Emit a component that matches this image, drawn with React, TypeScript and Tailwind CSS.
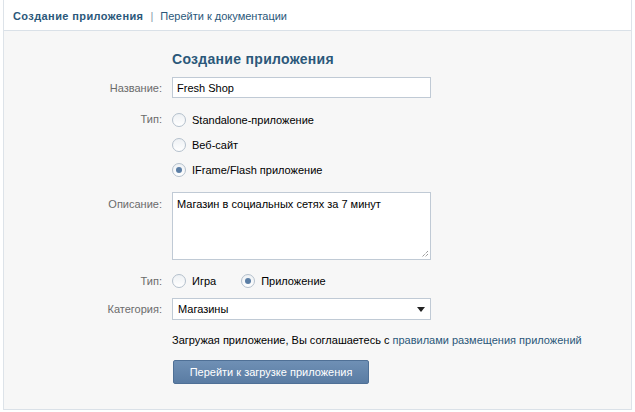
import React from "react";

const Radio = ({ checked = false }: { checked?: boolean }) => (
  <span className="relative inline-flex h-[14px] w-[14px] shrink-0 items-center justify-center rounded-full border border-[#b4c0cc] bg-gradient-to-b from-[#eef1f4] to-white">
    {checked && <span className="h-[6px] w-[6px] rounded-full bg-[#5b7ea5]" />}
  </span>
);

const Row = ({ label, children, top = false, className = "" }: { label: string; children: React.ReactNode; top?: boolean; className?: string }) => (
  <div className={`flex ${top ? "items-start" : "items-center"} ${className}`}>
    <div className={`w-[158px] shrink-0 text-right text-[#6b6b6b] ${top ? "pt-[5px]" : ""}`}>{label}</div>
    <div className="ml-[10px]">{children}</div>
  </div>
);

export default function App() {
  return (
    <div className="min-h-[412px] bg-white font-['Liberation_Sans',Arial,sans-serif] text-[11px] leading-[14px] text-black">
      <div className="ml-[3px] w-[629px] border-x border-[#dde3e9]">
        {/* header tabs */}
        <div className="flex h-[30px] items-center pl-[9px] pt-[1px]">
          <span className="font-bold tracking-[0.4px] text-[#2b587a]">Создание приложения</span>
          <span className="mx-[7px] text-[#8a9aab]">|</span>
          <span className="text-[#2b587a]">Перейти к документации</span>
        </div>

        <div className="border-y border-[#dae1e8] bg-[#f7f7f7] pb-[25px] pt-[20px]">
          <div className="ml-[168px] text-[14px] font-bold leading-[16px] tracking-[0.3px] text-[#2b587a]">Создание приложения</div>

          <Row label="Название:" className="mt-[10px]">
            <input
              readOnly
              defaultValue="Fresh Shop"
              className="h-[21px] w-[259px] border border-[#c0cad5] bg-white px-[4px] text-[11px] text-black outline-none"
            />
          </Row>

          <Row label="Тип:" top className="mt-[9px]">
            <div className="flex flex-col">
              {[
                ["Standalone-приложение", false],
                ["Веб-сайт", false],
                ["IFrame/Flash приложение", true],
              ].map(([t, c]) => (
                <div key={t as string} className="flex h-[25px] items-center gap-[6px]">
                  <Radio checked={c as boolean} />
                  <span>{t as string}</span>
                </div>
              ))}
            </div>
          </Row>

          <Row label="Описание:" top className="mt-[10px]">
            <div className="relative h-[68px] w-[259px] border border-[#c0cad5] bg-white px-[4px] pt-[4px]">
              Магазин в социальных сетях за 7 минут
              <svg className="absolute bottom-[1px] right-[1px]" width="9" height="9" viewBox="0 0 9 9">
                <path d="M8 2 L2 8 M8 5 L5 8" stroke="#6f6f6f" strokeWidth="1" strokeDasharray="1 1" />
              </svg>
            </div>
          </Row>

          <Row label="Тип:" className="mt-[8px] h-[25px]">
            <div className="flex items-center">
              <Radio />
              <span className="ml-[6px]">Игра</span>
              <span className="ml-[25px]"><Radio checked /></span>
              <span className="ml-[6px]">Приложение</span>
            </div>
          </Row>

          <Row label="Категория:" className="mt-[5px]">
            <div className="flex h-[22px] w-[259px] items-center justify-between border border-[#c0cad5] bg-white pl-[5px] pr-[5px]">
              <span>Магазины</span>
              <svg width="8" height="5" viewBox="0 0 8 5">
                <path d="M0 0 H8 L4 5 Z" fill="#222" />
              </svg>
            </div>
          </Row>

          <div className="ml-[168px] mt-[12px] leading-[16px]">
            Загружая приложение, Вы соглашаетесь с <span className="text-[#2b587a]">правилами размещения приложений</span>
          </div>

          <div className="ml-[169px] mt-[12px]">
            <button className="h-[24px] w-[196px] rounded-[2px] border border-[#4f7096] bg-gradient-to-b from-[#6f90b5] to-[#5a7ca3] text-[11px] text-white">
              Перейти к загрузке приложения
            </button>
          </div>
        </div>
      </div>
    </div>
  );
}
